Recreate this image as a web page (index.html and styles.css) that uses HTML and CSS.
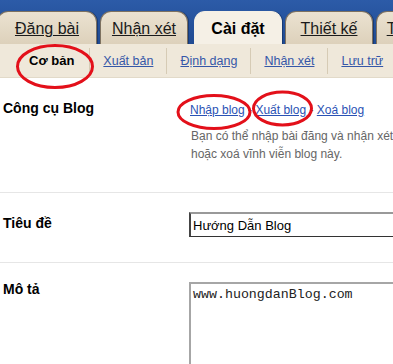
FILE: index.html
```html
<!DOCTYPE html>
<html lang="vi">
<head>
    <meta charset="UTF-8">
    <meta name="viewport" content="width=device-width, initial-scale=1.0">
    <title>Cài đặt - Cơ bản</title>
    <link rel="stylesheet" href="styles.css">
</head>
<body>
    <div class="page">
        <div class="tabs">
            <a class="tab tab-first" href="#">Đăng bài</a>
            <a class="tab" href="#">Nhận xét</a>
            <span class="tab tab-active">Cài đặt</span>
            <a class="tab" href="#">Thiết kế</a>
            <a class="tab" href="#">Thống kê</a>
        </div>

        <div class="subtabs">
            <span class="subtab subtab-active">Cơ bản</span>
            <a class="subtab" href="#">Xuất bản</a>
            <a class="subtab" href="#">Định dạng</a>
            <a class="subtab" href="#">Nhận xét</a>
            <a class="subtab" href="#">Lưu trữ</a>
        </div>

        <div class="settings">
            <div class="row row-tools">
                <div class="label">Công cụ Blog</div>
                <div class="value">
                    <div class="tool-links">
                        <a href="#">Nhập blog</a> - <a href="#">Xuất blog</a> - <a href="#">Xoá blog</a>
                    </div>
                    <p class="hint">Bạn có thể nhập bài đăng và nhận xét từ một tệp, xuất blog<br>hoặc xoá vĩnh viễn blog này.</p>
                </div>
            </div>

            <div class="row row-title">
                <div class="label">Tiêu đề</div>
                <div class="value">
                    <input class="text-input" type="text" value="Hướng Dẫn Blog">
                </div>
            </div>

            <div class="row row-desc">
                <div class="label">Mô tả</div>
                <div class="value">
                    <textarea class="text-area">www.huongdanBlog.com</textarea>
                </div>
            </div>
        </div>

        <!-- vòng đánh dấu màu đỏ -->
        <svg class="marks" width="393" height="364" viewBox="0 0 393 364">
            <ellipse cx="55" cy="66.5" rx="37.5" ry="21" />
            <ellipse cx="214" cy="112" rx="36" ry="16.5" />
            <ellipse cx="282.5" cy="108.5" rx="29" ry="16.5" />
        </svg>
    </div>
</body>
</html>
```

FILE: styles.css
```css
body {
    margin: 0;
    font-family: "Liberation Sans", Arial, sans-serif;
    background: #fff;
    color: #000;
}

.page {
    position: relative;
    width: 393px;
    height: 364px;
    overflow: hidden;
}

/* thanh tab chính */
.tabs {
    display: flex;
    align-items: flex-end;
    gap: 3px;
    height: 44px;
    background: linear-gradient(180deg, #2c5ba8 0%, #1f4a92 100%);
    white-space: nowrap;
}

.tab {
    flex: none;
    box-sizing: border-box;
    width: 88px;
    height: 33px;
    line-height: 33px;
    text-align: center;
    font-size: 16px;
    color: #1a1a1a;
    text-decoration: underline;
    background: linear-gradient(180deg, #ebe2d1 0%, #ddd1bb 100%);
    border: 1px solid #7d7160;
    border-bottom: none;
    border-radius: 11px 11px 0 0;
    box-shadow: 1px 0 0 #173a75;
}

.tab-first {
    width: 100px;
    margin-left: -3px;
}

.tab-active {
    margin-left: 3px;
    font-weight: bold;
    text-decoration: none;
    color: #000;
    background: #f5f0e6;
    border-color: #f5f0e6;
}

/* thanh tab phụ */
.subtabs {
    display: flex;
    align-items: center;
    height: 33px;
    padding-left: 16px;
    background: #efe8da;
    border-bottom: 1px solid #e2dac9;
    white-space: nowrap;
}

.subtab {
    flex: none;
    padding: 0 13px;
    font-size: 12.5px;
    line-height: 26px;
    color: #3557a8;
    text-decoration: underline;
    border-left: 1px solid #d6cbb5;
}

.subtab-active {
    padding-right: 15px;
    border-left: none;
    font-weight: bold;
    font-size: 13px;
    color: #000;
    text-decoration: none;
}

/* nội dung cài đặt */
.row {
    display: grid;
    grid-template-columns: 186px 1fr;
    border-bottom: 1px solid #e6e6e6;
}

.label {
    padding-left: 3px;
    font-size: 14px;
    font-weight: bold;
    line-height: 16px;
}

.row-tools {
    height: 115px;
    padding-top: 22px;
    box-sizing: border-box;
}

.tool-links {
    font-size: 12px;
    line-height: 16px;
    padding-top: 2px;
    padding-left: 4px;
    color: #333;
}

.tool-links a {
    color: #2a52b4;
}

.hint {
    margin: 9px 0 0 5px;
    font-size: 12px;
    line-height: 18px;
    color: #666;
    white-space: nowrap;
}

.row-title {
    height: 70px;
    box-sizing: border-box;
    padding-top: 19px;
}

.row-title .label {
    padding-top: 3px;
}

.row-title .value {
    padding-left: 3px;
}

.text-input {
    box-sizing: border-box;
    width: 260px;
    height: 25px;
    padding: 0 2px;
    font-family: "Liberation Sans", Arial, sans-serif;
    font-size: 13px;
    color: #000;
    border: 1px solid #333;
    border-top: 2px solid #999;
    border-left: 2px solid #444;
    background: #fff;
}

.row-desc {
    border-bottom: none;
    padding-top: 18px;
}

.row-desc .value {
    padding-left: 3px;
    padding-top: 1px;
}

.text-area {
    box-sizing: border-box;
    width: 260px;
    height: 120px;
    padding: 3px 2px;
    font-family: "Liberation Mono", "Courier New", monospace;
    font-size: 13.3px;
    color: #222;
    border: none;
    border-top: 2px solid #a6a6a6;
    border-left: 2px solid #a6a6a6;
    resize: none;
}

/* vòng đỏ đánh dấu */
.marks {
    position: absolute;
    left: 0;
    top: 0;
    pointer-events: none;
}

.marks ellipse {
    fill: none;
    stroke: #e3101a;
    stroke-width: 3;
}
```
